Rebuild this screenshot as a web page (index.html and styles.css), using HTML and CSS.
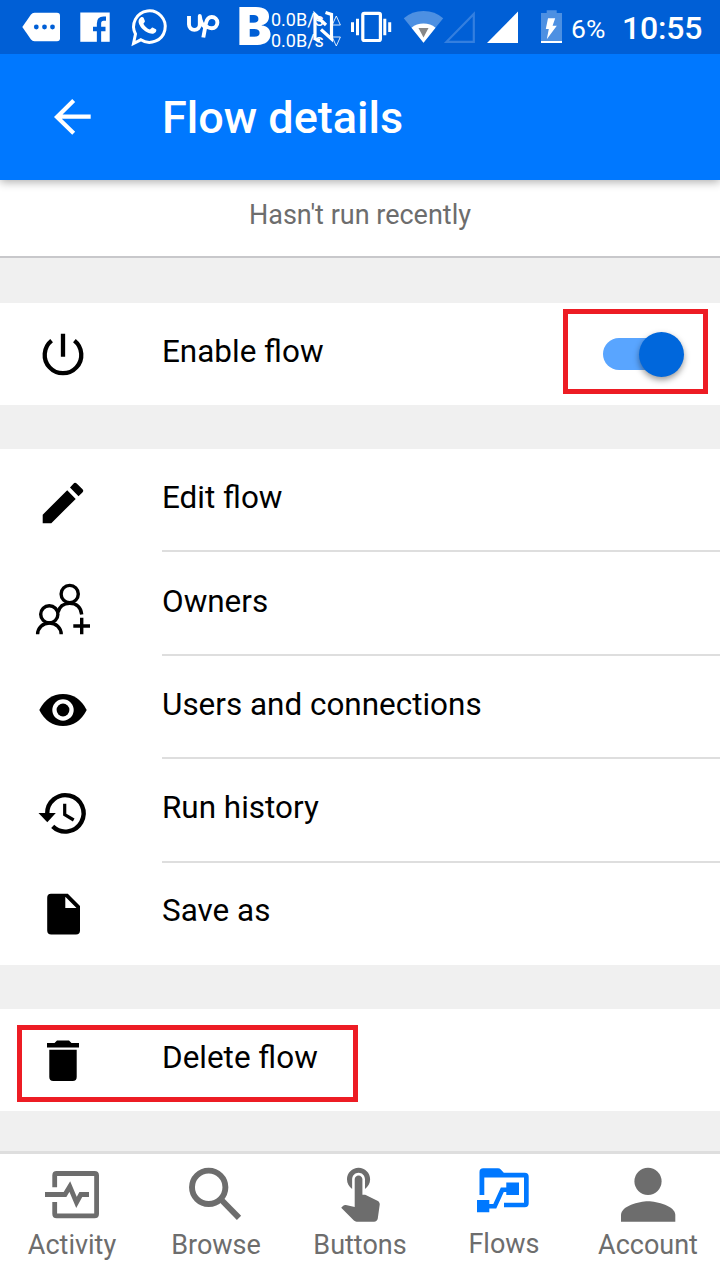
FILE: index.html
```html
<!DOCTYPE html>
<html lang="en">
<head>
<meta charset="utf-8">
<title>Flow details</title>
<link rel="stylesheet" href="styles.css">
</head>
<body>
<div class="screen">
  <div class="status">
    <svg width="70" height="54" viewBox="0 0 70 54"><path fill="#fff" d="M22.3 27 31 14.5Q32.3 12.7 34.500 12.700H57a3 3 0 0 1 3 3V38.300a3 3 0 0 1-3 3H34.500Q32.300 41.300 31 39.500Z"/><g fill="#005fd6"><circle cx="36.300" cy="27" r="2.400"/><circle cx="44.500" cy="27" r="2.400"/><circle cx="52.500" cy="27" r="2.400"/></g></svg>
    <svg width="50" height="54" viewBox="70 0 50 54"><path fill="#fff" d="M80.300 12.500h29.400v29.300H80.300z"/><path fill="none" stroke="#005fd6" stroke-width="4.300" d="M99 42V23.500Q99 18.700 103.500 18.700H106M93 29h12.500"/></svg>
    <svg width="57" height="54" viewBox="121.500 1 57 54"><path fill="none" stroke="#fff" stroke-width="3" d="M135 44.500 137 35A15.800 15.800 0 1 1 142.300 40.800Z"/><path fill="#fff" d="M142.500 18.200c1-.5 2.200-.3 2.600.6l1.300 3.100c.3.800-1.300 2.200-1.500 2.800 1.500 2.900 3.700 4.700 6.500 5.900.8-.3 1.800-2.300 2.700-2l3.300 1.700c.8.500.5 2.300-.6 3.300-2.300 2.100-5.300 1.200-8.700-.5-3.500-1.800-6.800-5.500-7.900-9.300-.6-2.400.6-4.700 2.300-5.600Z"/></svg>
    <svg width="51" height="54" viewBox="177 0 51 54"><path fill="none" stroke="#fff" stroke-width="3.900" stroke-linejoin="round" d="M189 16v8.500a5.400 5.400 0 0 0 10.800 0V16c.5 5 2.500 9.500 6.200 11.800M203.300 37.500l2.700-14.500c1-4.500 3.200-6 5.800-6a5.300 5.300 0 0 1 0 11.200q-4 0-7.500-3.700"/></svg>
    <div class="speed">
      <span class="bold-mark">B</span>
      <div class="rates"><span>0.0B/s</span><span>0.0B/s</span></div>
      <svg class="speed-art" width="116" height="54" viewBox="228 0 116 54"><g fill="none" stroke="#fff" stroke-width="3.200"><path d="M315 40V14.500L326 25M321 29.500 331.500 39V14.500L325.500 12.500M315 39l5 1.500"/></g><g fill="none" stroke="#fff" stroke-opacity=".85" stroke-width="1"><path d="M332.200 25h8.200L336.300 16zM332.200 37h8.200L336.300 46z"/></g></svg>
    </div>
    <svg width="54" height="54" viewBox="344 0 54 54"><rect x="362.800" y="13.300" width="17.600" height="27.200" rx="1.500" fill="none" stroke="#fff" stroke-width="3.200"/><path fill="#fff" d="M351 22.300h3v9.700h-3zM356 18.700h3v16.600h-3zM383.300 18.700h3v16.600h-3zM388.200 22.300h3v9.700h-3z"/></svg>
    <svg width="132" height="54" viewBox="398 0 132 54"><path fill="#4d90e2" d="M423.500 42.700 403.800 18.300Q412 11 423.500 11t19.700 7.300Z"/><path fill="#fff" d="M423.500 42.700 411.500 27.700Q416.500 23.500 423.500 23.500t12 4.200Z"/><path fill="#888" d="M418.500 28h10l-5 9.500z"/><path fill="none" stroke="#347fdf" stroke-width="2.200" d="M446.500 41.800H473.800V14Z"/><path fill="#fff" d="M487 43h31V11.500z"/></svg>
    <svg width="41" height="54" viewBox="530 0 41 54"><path fill="#4d90e2" d="M546.700 10.300h10v2.700h5.300v28.300h-21V13h5.700z"/><path fill="#fff" d="M541 41h21v2h-21zM548 18.300h7.200l-2.600 7.400h4.200l-10 13.600 2-10.300h-3z"/></svg>
    <span class="battery">6%</span>
    <span class="clock">10:55</span>
  </div>

  <header class="bar">
    <svg class="back" width="60" height="60" viewBox="42 87 60 60"><path fill="none" stroke="#fff" stroke-width="4.200" d="M90.700 116.700H57M73.700 100.500 57 116.900 73.700 133.200"/></svg>
    <h1>Flow details</h1>
  </header>

  <div class="recent">Hasn't run recently</div>

  <section class="group">
    <div class="row">
      <svg class="icon" width="126" height="60" viewBox="0 325 126 60"><path fill="none" stroke="#000" stroke-width="4.300" d="M51.600 340.600a18.300 18.300 0 1 0 22.800 0M63 333.700v23"/></svg>
      <span class="label">Enable flow</span>
      <span class="marker marker-toggle"><span class="track"><span class="thumb"></span></span></span>
    </div>
  </section>

  <section class="group main">
    <div class="row lined">
      <svg class="icon" width="126" height="60" viewBox="0 471 126 60"><path d="M42.700 514.700V523.200H51.300L75.700 498.900 67.200 490.200ZM70 487.500 73.400 483.800Q75 482 76.700 483.600L82.300 489Q84.200 490.700 82.400 492.500L78.500 496.200Z"/></svg>
      <span class="label">Edit flow</span>
    </div>
    <div class="row lined">
      <svg class="icon" width="126" height="60" viewBox="0 574 126 60"><g fill="none" stroke="#000" stroke-width="3.400"><circle cx="69.700" cy="593" r="8.600"/><circle cx="49.300" cy="613.300" r="8.600"/><path d="M37.600 633.300a11.800 11.300 0 0 1 23.600 0M58 611.500Q60 602.400 69.700 602.400 80.500 602.400 81.700 613.500M81.700 616.700v16.600M73.300 625h16.700"/></g></svg>
      <span class="label">Owners</span>
    </div>
    <div class="row lined">
      <svg class="icon" width="126" height="60" viewBox="0 678 126 60"><path d="M39.300 710Q47.500 694 63 694T86.700 710Q78.500 726 63 726T39.300 710Z"/><circle cx="63" cy="710" r="10.700" fill="#fff"/><circle cx="63" cy="710" r="6.400"/></svg>
      <span class="label">Users and connections</span>
    </div>
    <div class="row lined">
      <svg class="icon" width="126" height="60" viewBox="0 781 126 60"><path fill="none" stroke="#000" stroke-width="4.400" d="M47.200 814A18.200 18.200 0 1 1 52.700 826.400"/><path d="M38.500 813h17.300l-8.500 9.300z"/><path fill="none" stroke="#000" stroke-width="3.200" d="M64.700 803.700v11l9 5.300"/></svg>
      <span class="label">Run history</span>
    </div>
    <div class="row">
      <svg class="icon" width="126" height="60" viewBox="0 884.500 126 60"><path fill-rule="evenodd" d="M51 894.300H67.800L80 906.600V931a4 4 0 0 1-4 4H51.200a4 4 0 0 1-4-4V898.300a4 4 0 0 1 3.800-4ZM65.300 897.300V908.600H76.500Z"/></svg>
      <span class="label">Save as</span>
    </div>
  </section>

  <section class="group last">
    <div class="row">
      <svg class="icon" width="126" height="60" viewBox="0 1031 126 60"><path d="M47 1043H54.500L57 1040.500H69L71.500 1043H79V1047.500H47ZM49.300 1049.700H76.700V1077a4 4 0 0 1-4 4H53.300a4 4 0 0 1-4-4Z"/></svg>
      <span class="label">Delete flow</span>
      <span class="marker marker-delete"></span>
    </div>
  </section>

  <nav class="tabs">
    <a class="tab"><svg width="144" height="66" viewBox="0 1160 144 66"><g fill="none" stroke="#6d6d6d" stroke-width="4.800"><path d="M54.700 1187.300V1175.500Q54.700 1173.500 56.700 1173.500H94.500Q96.600 1173.500 96.600 1175.500V1213.700Q96.600 1215.800 94.500 1215.800H56.700Q54.700 1215.800 54.700 1213.700V1202"/><path d="M45 1194.500H65L69.800 1186.500 76.500 1202.500 80.800 1194.500H89"/></g></svg><span>Activity</span></a>
    <a class="tab"><svg width="144" height="66" viewBox="144 1160 144 66"><g fill="none" stroke="#6d6d6d"><circle cx="208.700" cy="1187.300" r="16.700" stroke-width="5.900"/><path stroke-width="6" d="M222 1200.500 239 1217.800"/></g></svg><span>Browse</span></a>
    <a class="tab"><svg width="144" height="66" viewBox="288 1160 144 66"><path fill="#6d6d6d" transform="translate(329 1160) scale(2.570)" d="M9 11.240V7.500C9 6.120 10.120 5 11.500 5S14 6.120 14 7.500v3.740c1.210-.81 2-2.180 2-3.740C16 5.010 13.990 3 11.500 3S7 5.010 7 7.500c0 1.560.79 2.930 2 3.740zm9.840 4.630l-4.540-2.260c-.17-.07-.35-.11-.54-.11H13v-6c0-.83-.67-1.500-1.500-1.500S10 6.670 10 7.500v10.740l-3.430-.72c-.08-.01-.15-.03-.24-.03-.31 0-.59.13-.79.33l-.79.8 4.940 4.940c.27.27.65.44 1.060.44h6.790c.75 0 1.330-.55 1.440-1.280l.75-5.270c.01-.07.02-.14.02-.2 0-.62-.38-1.160-.91-1.380z"/></svg><span>Buttons</span></a>
    <a class="tab raised"><svg width="144" height="66" viewBox="432 1160 144 66"><path fill="#0078ff" d="M479.500 1195V1172Q479.500 1168.300 483.300 1168.300H498Q499.700 1168.300 500.800 1169.500L503.800 1172.700H524.700Q528.700 1172.700 528.700 1176.700V1203.300Q528.700 1207.300 524.700 1207.300H504V1202.700H524V1177.500H484.300V1195ZM477 1200H489.300V1212.300H477ZM506.300 1182.500H519V1195H506.300Z"/><path fill="none" stroke="#0078ff" stroke-width="4.500" d="M489 1206.200H494.800L502.300 1189.800H507"/></svg><span>Flows</span></a>
    <a class="tab"><svg width="144" height="66" viewBox="576 1160 144 66"><g fill="#6d6d6d"><circle cx="648" cy="1181.300" r="13.600"/><path d="M621 1221.700V1215C621 1206 639 1201.200 648 1201.200S675.300 1206 675.300 1215V1221.700Z"/></g></svg><span>Account</span></a>
  </nav>
</div>
</body>
</html>
```
FILE: styles.css
```css
* { box-sizing: border-box; }
body { margin: 0; font-family: Roboto, "Liberation Sans", sans-serif; }
svg { display: block; flex: none; }
.screen { width: 720px; height: 1280px; display: flex; flex-direction: column; background: #f0f0f0; overflow: hidden; }
.status { height: 54px; flex: none; display: flex; background: #005fd6; color: #fff; z-index: 2; }
.speed { position: relative; width: 116px; height: 54px; flex: none; }
.bold-mark { position: absolute; left: 9px; top: 0; font-family: Inter, Roboto, sans-serif; font-size: 52px; line-height: 54px; font-weight: 900; }
.rates { position: absolute; left: 43px; top: 9px; display: flex; flex-direction: column; font-size: 18px; line-height: 21px; }
.speed-art { position: absolute; left: 0; top: 0; }
.battery { width: 51px; font-size: 26.500px; line-height: 57px; }
.clock { font-size: 32px; font-weight: 500; line-height: 57px; letter-spacing: -.2px; }
.bar { height: 126px; flex: none; display: flex; align-items: center; background: #0078ff; color: #fff; padding-left: 42px; gap: 60px; box-shadow: 0 2px 9px rgba(0, 0, 0, .33); z-index: 1; }
h1 { margin: 2px 0 0; font-size: 45px; line-height: 60px; font-weight: 500; }
.recent { height: 78px; flex: none; background: #fff; border-bottom: 2px solid #c8c8cb; color: #6d6d6d; font-size: 27px; line-height: 71px; text-align: center; margin-bottom: 45px; }
.group { margin-bottom: 44px; flex: none; }
.group.main { margin-bottom: 44.500px; }
.group.last { margin-bottom: 0; }
.row { position: relative; height: 102px; display: flex; align-items: center; background: #fff; padding-top: 1px; }
.row.lined { height: 103.400px; }
.row.lined::after { content: ""; position: absolute; left: 162px; right: 0; bottom: 0; height: 2px; background: #dedede; }
.icon { margin-right: 36px; }
.label { font-size: 31.450px; line-height: 40px; padding-bottom: 6px; color: #000; }
.marker { position: absolute; border: 5px solid #ed1c24; }
.marker-toggle { left: 563px; top: 6px; width: 145px; height: 85px; padding: 24px 0 0 35px; }
.marker-delete { left: 17px; top: 16px; width: 341px; height: 77px; }
.track { display: flex; justify-content: flex-end; align-items: center; width: 81px; height: 32px; border-radius: 16px; background: linear-gradient(90deg, #59a5ff 60px, transparent 60px); }
.thumb { width: 45px; height: 45px; border-radius: 50%; background: #0067dc; box-shadow: 0 3px 6px rgba(0, 0, 0, .4); }
.tabs { height: 129px; flex: none; margin-top: auto; display: flex; background: #fff; border-top: 3px solid #dedede; padding-top: 6px; color: #6d6d6d; }
.tab { width: 144px; display: flex; flex-direction: column; align-items: center; font-size: 27px; line-height: 38px; }
.raised span { margin-top: -1px; }
```
